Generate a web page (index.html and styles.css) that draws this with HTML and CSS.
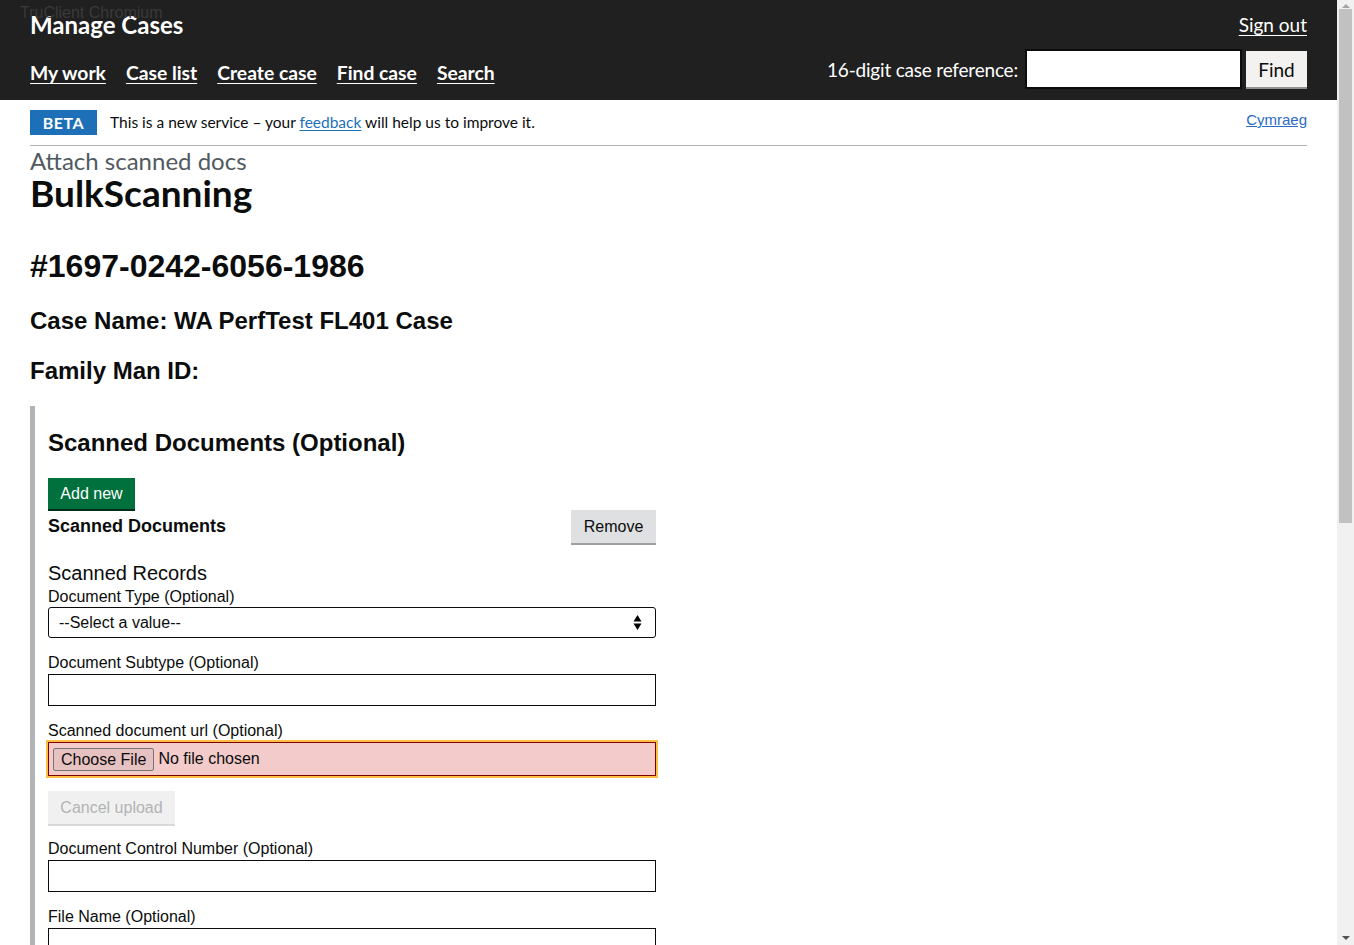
FILE: index.html
```html
<!DOCTYPE html>
<html lang="en">
<head>
<meta charset="utf-8">
<title>Manage Cases</title>
<link rel="stylesheet" href="styles.css">
</head>
<body>
<div class="window-title">TruClient Chromium</div>
<div class="scrollbar">
  <span class="sb-arrow sb-up"></span>
  <span class="sb-thumb"></span>
  <span class="sb-arrow sb-down"></span>
</div>
<header class="header">
  <div class="header-left">
    <div class="service-name">Manage Cases</div>
    <nav class="nav">
      <a href="#">My work</a>
      <a href="#">Case list</a>
      <a href="#">Create case</a>
      <a href="#">Find case</a>
      <a href="#">Search</a>
    </nav>
  </div>
  <div class="header-right">
    <a class="sign-out" href="#">Sign out</a>
    <div class="case-search">
      <label class="case-label">16-digit case reference:</label>
      <input class="case-input" type="text">
      <button class="find-btn">Find</button>
    </div>
  </div>
</header>
<main class="page">
  <div class="phase">
    <div class="phase-left">
      <strong class="tag">BETA</strong>
      <span class="phase-text">This is a new service – your <a href="#"> feedback</a> will help us to improve it.</span>
    </div>
    <a class="lang" href="#">Cymraeg</a>
  </div>
  <div class="caption">Attach scanned docs</div>
  <h1 class="title">BulkScanning</h1>
  <h2 class="case-ref">#1697-0242-6056-1986</h2>
  <h3 class="case-meta">Case Name: WA PerfTest FL401 Case</h3>
  <h3 class="case-meta fm">Family Man ID:</h3>

  <div class="collection">
    <h2 class="coll-title">Scanned Documents (Optional)</h2>
    <button class="btn-green">Add new</button>
    <div class="item-head">
      <span class="item-title">Scanned Documents</span>
      <button class="btn-grey">Remove</button>
    </div>
    <div class="form">
      <div class="record-title">Scanned Records</div>
      <div class="field first">
        <label class="label">Document Type (Optional)</label>
        <div class="select">
          <span>--Select a value--</span>
          <svg width="9" height="17" viewBox="0 0 9 17"><path d="M4.5 1 L8.5 7.5 H0.5 Z M4.5 16 L0.5 9.5 H8.5 Z" fill="#000"/></svg>
        </div>
      </div>
      <div class="field">
        <label class="label">Document Subtype (Optional)</label>
        <div class="input"></div>
      </div>
      <div class="field">
        <label class="label">Scanned document url (Optional)</label>
        <div class="file">
          <span class="file-btn">Choose File</span>
          <span class="file-text">No file chosen</span>
        </div>
      </div>
      <button class="btn-disabled">Cancel upload</button>
      <div class="field">
        <label class="label">Document Control Number (Optional)</label>
        <div class="input"></div>
      </div>
      <div class="field">
        <label class="label">File Name (Optional)</label>
        <div class="input"></div>
      </div>
    </div>
  </div>
</main>
</body>
</html>
```
FILE: styles.css
```css
html, body { margin: 0; padding: 0; }
html { height: 945px; overflow: hidden; }
body { background: #fff; color: #0b0c0c; font-family: "Lato", "Liberation Sans", sans-serif; padding-right: 17px; }

.window-title {
  position: absolute; left: 20px; top: 4px;
  font-family: "Liberation Sans", sans-serif; font-size: 16px;
  color: #3a3a3a; z-index: 5;
}

.scrollbar {
  position: fixed; top: 0; right: 0; width: 17px; height: 945px; background: #f1f1f1; z-index: 10;
  display: flex; flex-direction: column; align-items: center;
}
.sb-arrow { width: 0; height: 0; border-left: 4px solid transparent; border-right: 4px solid transparent; }
.sb-up { border-bottom: 4px solid #a3a3a3; margin-top: 4px; }
.sb-down { border-top: 4px solid #505050; margin-top: auto; margin-bottom: 5px; }
.sb-thumb { width: 13px; height: 514px; background: #c1c1c1; margin-top: 1px; }

.header {
  background: #202020; height: 100px; box-sizing: border-box;
  padding: 0 30px; display: flex; justify-content: space-between; color: #fff;
}
.header-left { display: flex; flex-direction: column; }
.service-name { font-weight: 700; font-size: 24px; margin-top: 10px; line-height: 30px; letter-spacing: 0; }
.nav { display: flex; gap: 20px; margin-top: 21px; }
.nav a { color: #fff; font-weight: 700; font-size: 19.3px; text-decoration: underline; text-underline-offset: 3px; letter-spacing: 0; }
.header-right { display: flex; flex-direction: column; align-items: flex-end; }
.sign-out { color: #fff; font-size: 19px; margin-top: 12px; line-height: 25px; text-underline-offset: 3px; }
.case-search { display: flex; align-items: center; margin-top: 12px; }
.case-label { font-size: 19px; margin-right: 7px; letter-spacing: -0.2px; }
.case-input { width: 217px; height: 40px; box-sizing: border-box; border: 2px solid #0b0c0c; background: #fff; margin: 0 4px 0 0; padding: 0; }
.find-btn {
  width: 61px; height: 36px; margin-top: 0; border: 0; background: #f3f2f1; box-shadow: 0 2px 0 #929191;
  font-family: "Lato", sans-serif; font-size: 19px; color: #0b0c0c; padding: 0;
}

.page { padding: 0 30px; }
.phase { display: flex; justify-content: space-between; align-items: flex-start; padding-top: 10px; padding-bottom: 10px; border-bottom: 1px solid #b1b4b6; }
.phase-left { display: flex; align-items: center; }
.tag { background: #1d70b8; color: #fff; font-weight: 700; font-size: 16px; letter-spacing: 0.5px; width: 67px; height: 25px; display: flex; align-items: center; justify-content: center; margin-right: 13px; }
.phase-text { font-size: 15.5px; color: #0b0c0c; margin-top: -2px; }
.phase-text a { color: #1d70b8; text-underline-offset: 2px; }
.lang { font-family: "Liberation Sans", sans-serif; font-size: 15px; color: #2b6cc4; margin-top: 1px; }

.caption { color: #505a5f; font-size: 24px; margin-top: 1px; line-height: 28px; }
.title { font-size: 37px; font-weight: 700; margin: -2px 0 0; line-height: 40px; }
.case-ref { font-family: "Liberation Sans", sans-serif; font-size: 32px; font-weight: 700; margin: 33px 0 0; line-height: 40px; }
.case-meta { font-family: "Liberation Sans", sans-serif; font-size: 24px; font-weight: 700; margin: 20px 0 0; line-height: 30px; }
.case-meta.fm { margin-top: 20px; }

.collection { margin-top: 20px; border-left: 5px solid #b1b4b6; padding-left: 13px; font-family: "Liberation Sans", sans-serif; }
.coll-title { font-size: 24px; font-weight: 700; margin: 0; padding-top: 22px; line-height: 30px; }
.btn-green {
  margin-top: 20px; background: #00703c; color: #fff; border: 0; box-shadow: 0 2px 0 #002d18;
  font-family: "Liberation Sans", sans-serif; font-size: 16px; height: 31px; width: 87px; padding: 0; display: block;
}
.item-head { width: 608px; display: flex; justify-content: space-between; align-items: center; margin-top: 1px; }
.item-title { font-size: 18px; font-weight: 700; }
.btn-grey {
  background: #dee0e2; color: #0b0c0c; border: 0; box-shadow: 0 2px 0 #9ea0a2;
  font-family: "Liberation Sans", sans-serif; font-size: 16px; width: 85px; height: 33px; padding: 0;
}
.form { width: 608px; }
.record-title { font-size: 20px; margin-top: 18px; line-height: 24px; }
.field { margin-top: 15px; }
.field.first { margin-top: 0; }
.label { display: block; font-size: 16px; line-height: 20px; margin-bottom: 1px; }
.field.first .label { margin-top: 2px; margin-bottom: 0; }
.select {
  height: 31px; box-sizing: border-box; border: 1px solid #0b0c0c; border-radius: 3px;
  display: flex; align-items: center; justify-content: space-between; padding: 0 13px 0 10px; font-size: 16px;
}
.input { height: 32px; box-sizing: border-box; border: 1px solid #0b0c0c; }
.file {
  height: 34px; box-sizing: border-box; border: 1px solid #7c0000; outline: 2px solid #ffbf47;
  background: #f3cbcb; display: flex; align-items: center; padding: 0 4px; margin-top: 1px; font-size: 16px;
}
.file-btn { border: 1px solid #767676; border-radius: 2px; background: #e6c1c1; padding: 1px 7px; line-height: 19px; margin-right: 4px; }
.btn-disabled {
  display: block; margin-top: 15px; background: #f0f0f0; color: #b1b4b6; border: 0; box-shadow: 0 2px 0 #d9d9d9;
  font-family: "Liberation Sans", sans-serif; font-size: 16px; width: 127px; height: 33px; padding: 0;
}
.btn-disabled + .field { margin-top: 15px; }
```
